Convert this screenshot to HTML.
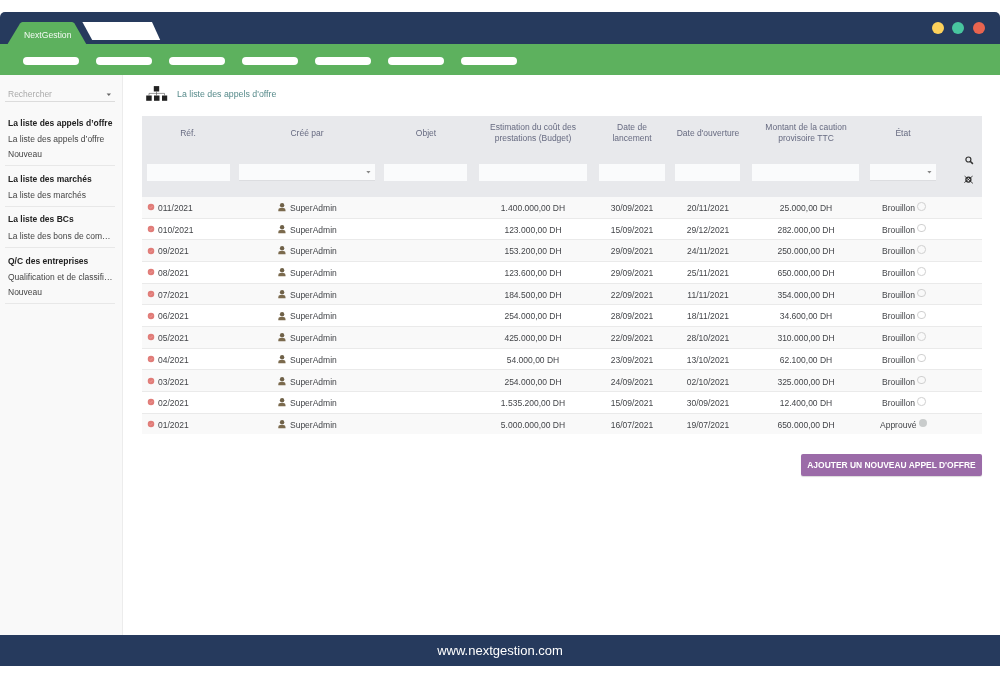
<!DOCTYPE html><html><head><meta charset="utf-8"><style>
*{box-sizing:border-box}
html,body{margin:0;padding:0;width:1000px;height:679px;overflow:hidden;background:#fff;font-family:"Liberation Sans",sans-serif}
.a{position:absolute}
.t{position:absolute;white-space:nowrap;line-height:1;will-change:transform}
.topbar{left:0;top:12px;width:1000px;height:32px;background:#263a5d;border-radius:5px 5px 0 0}
.greenbar{left:0;top:43.5px;width:1000px;height:31.5px;background:#5db15e}
.pill{top:57px;width:56px;height:8px;border-radius:4px;background:#fff}
.dot{width:12px;height:12px;border-radius:50%;top:21.5px}
.side{left:0;top:75px;width:123px;height:560px;background:#f9f9f9;border-right:1px solid #ececec}
.sep{left:5px;width:110px;height:1px;background:#e8e8e8}
.sb{font-size:8.5px;font-weight:bold;color:#222}
.si{font-size:8.5px;color:#444}
.footer{left:0;top:635px;width:1000px;height:31px;background:#263a5d}
.hdr{left:142px;top:116px;width:840px;height:81px;background:#e8e9ec}
.inp{top:163.5px;height:17px;background:#fafbfc}
.ht{font-size:8.5px;color:#666a80;text-align:center;line-height:11.1px}
.row{left:142px;width:840px}
.rt{font-size:8.5px;color:#434549}
</style></head><body>
<div class="a topbar"></div>
<div class="a greenbar"></div>
<svg class="a" style="left:0;top:0" width="200" height="46"><path d="M7 45 L20 23.5 Q21 22 22.5 22 L72 22 Q73.5 22 74.5 23.5 L86.8 45 Z" fill="#5db15e"/><path d="M82.4 22 L152 22 L160.2 40 L92.2 40 Z" fill="#fff"/></svg>
<div class="t" style="left:23.6px;top:30.5px;font-size:8.65px;color:#f4faf4">NextGestion</div>
<div class="a pill" style="left:23px"></div>
<div class="a pill" style="left:96px"></div>
<div class="a pill" style="left:169px"></div>
<div class="a pill" style="left:242px"></div>
<div class="a pill" style="left:315px"></div>
<div class="a pill" style="left:388px"></div>
<div class="a pill" style="left:461px"></div>
<div class="a dot" style="left:932px;background:#fdd15b"></div>
<div class="a dot" style="left:952px;background:#48c59f"></div>
<div class="a dot" style="left:973px;background:#e9644f"></div>
<div class="a side"></div>
<div class="t" style="left:8.3px;top:90px;font-size:8.5px;color:#aaa">Rechercher</div>
<svg class="a" style="left:106px;top:92.5px" width="6" height="4"><path d="M0.6 0.4 L5 0.4 L2.8 3Z" fill="#666"/></svg>
<div class="a sep" style="top:101px;background:#dcdcdc"></div>
<div class="t sb" style="left:8.2px;top:118.8px">La liste des appels d’offre</div>
<div class="t si" style="left:8.2px;top:135.0px">La liste des appels d’offre</div>
<div class="t si" style="left:8.2px;top:149.6px">Nouveau</div>
<div class="a sep" style="top:165px"></div>
<div class="t sb" style="left:8.2px;top:175.0px">La liste des marchés</div>
<div class="t si" style="left:8.2px;top:190.7px">La liste des marchés</div>
<div class="a sep" style="top:206px"></div>
<div class="t sb" style="left:8.2px;top:215.4px">La liste des BCs</div>
<div class="t si" style="left:8.2px;top:231.5px">La liste des bons de com…</div>
<div class="a sep" style="top:247px"></div>
<div class="t sb" style="left:8.2px;top:256.6px">Q/C des entreprises</div>
<div class="t si" style="left:8.2px;top:272.5px">Qualification et de classifi…</div>
<div class="t si" style="left:8.2px;top:287.7px">Nouveau</div>
<div class="a sep" style="top:303px"></div>
<svg class="a" style="left:145px;top:85px" width="24" height="17"><rect x="8.8" y="1.1" width="5.4" height="5.4" fill="#222"/><rect x="1.2" y="10.5" width="5.5" height="5.3" fill="#222"/><rect x="9" y="10.5" width="5.5" height="5.3" fill="#222"/><rect x="17" y="10.5" width="5.2" height="5.3" fill="#222"/><path d="M4 10.5 V8.4 H19.5 V10.5 M11.5 6.5 V10.5" stroke="#555" stroke-width="0.6" fill="none"/></svg>
<div class="t" style="left:176.7px;top:89.7px;font-size:8.8px;color:#568a8a">La liste des appels d'offre</div>
<div class="a hdr"></div>
<div class="t ht" style="left:128px;width:120px;top:127.8px">Réf.</div>
<div class="t ht" style="left:247px;width:120px;top:127.8px">Créé par</div>
<div class="t ht" style="left:365.6px;width:120px;top:127.8px">Objet</div>
<div class="t ht" style="left:473px;width:120px;top:122.1px">Estimation du coût des<br>prestations (Budget)</div>
<div class="t ht" style="left:572px;width:120px;top:122.1px">Date de<br>lancement</div>
<div class="t ht" style="left:647.7px;width:120px;top:127.8px">Date d'ouverture</div>
<div class="t ht" style="left:745.5px;width:120px;top:122.1px">Montant de la caution<br>provisoire TTC</div>
<div class="t ht" style="left:843.3px;width:120px;top:127.8px">État</div>
<div class="a inp" style="left:147px;width:83px;"></div>
<div class="a inp" style="left:239px;width:136px;border-bottom:1px solid #dcdde0;"></div>
<svg class="a" style="left:366.4px;top:171.2px" width="5" height="3"><path d="M0.3 0 L4.5 0 L2.4 2.6Z" fill="#888"/></svg>
<div class="a inp" style="left:384px;width:83px;"></div>
<div class="a inp" style="left:479px;width:108px;"></div>
<div class="a inp" style="left:599px;width:66px;"></div>
<div class="a inp" style="left:675px;width:65px;"></div>
<div class="a inp" style="left:752px;width:107px;"></div>
<div class="a inp" style="left:870px;width:66px;border-bottom:1px solid #dcdde0;"></div>
<svg class="a" style="left:927.4px;top:171.2px" width="5" height="3"><path d="M0.3 0 L4.5 0 L2.4 2.6Z" fill="#888"/></svg>
<svg class="a" style="left:963px;top:154px" width="12" height="12"><circle cx="5.4" cy="5.5" r="2.5" stroke="#333" stroke-width="1.2" fill="none"/><path d="M7.2 7.3 L9.9 9.9" stroke="#333" stroke-width="1.5"/></svg>
<svg class="a" style="left:963px;top:175px" width="12" height="10"><circle cx="5.4" cy="4.6" r="2.5" stroke="#2a2a2a" stroke-width="1.3" fill="none"/><path d="M1.6 1.1 L9.9 8.4 M9.6 1.1 L1.3 7.6" stroke="#333" stroke-width="0.9"/></svg>
<div class="a row" style="top:197px;height:21px;background:#f9f9f9"></div>
<svg class="a" style="left:147.1px;top:203.10px" width="8" height="8"><circle cx="4" cy="4" r="3.25" fill="#e07c78"/><path d="M2.5 4.1 L3.6 5.1 L5.5 3" stroke="#f3a19d" stroke-width="0.7" fill="none"/></svg>
<div class="t rt" style="left:157.8px;top:203.90px">011/2021</div>
<svg class="a" style="left:277.5px;top:203.00px" width="8" height="9"><circle cx="4.1" cy="2.2" r="2.2" fill="#6f6148"/><path d="M0.3 8.2 V6.9 Q0.3 4.9 2.4 4.9 H5.4 Q7.5 4.9 7.5 6.9 V8.2Z" fill="#7b6a4d"/></svg>
<div class="t rt" style="left:289.7px;top:203.90px">SuperAdmin</div>
<div class="t rt" style="left:473.29999999999995px;width:120px;text-align:center;top:203.90px">1.400.000,00 DH</div>
<div class="t rt" style="left:572.2px;width:120px;text-align:center;top:203.90px">30/09/2021</div>
<div class="t rt" style="left:647.5px;width:120px;text-align:center;top:203.90px">20/11/2021</div>
<div class="t rt" style="left:745.6px;width:120px;text-align:center;top:203.90px">25.000,00 DH</div>
<div class="t rt" style="left:881.7px;top:203.90px">Brouillon</div>
<div class="a" style="left:917px;top:202.00px;width:8.5px;height:8.5px;border-radius:50%;border:1px solid #d0d0d0"></div>
<div class="a row" style="top:218px;height:21px;background:#fff"></div>
<div class="a row" style="top:218px;height:1px;background:#eaeaea"></div>
<svg class="a" style="left:147.1px;top:224.80px" width="8" height="8"><circle cx="4" cy="4" r="3.25" fill="#e07c78"/><path d="M2.5 4.1 L3.6 5.1 L5.5 3" stroke="#f3a19d" stroke-width="0.7" fill="none"/></svg>
<div class="t rt" style="left:157.8px;top:225.60px">010/2021</div>
<svg class="a" style="left:277.5px;top:224.70px" width="8" height="9"><circle cx="4.1" cy="2.2" r="2.2" fill="#6f6148"/><path d="M0.3 8.2 V6.9 Q0.3 4.9 2.4 4.9 H5.4 Q7.5 4.9 7.5 6.9 V8.2Z" fill="#7b6a4d"/></svg>
<div class="t rt" style="left:289.7px;top:225.60px">SuperAdmin</div>
<div class="t rt" style="left:473.29999999999995px;width:120px;text-align:center;top:225.60px">123.000,00 DH</div>
<div class="t rt" style="left:572.2px;width:120px;text-align:center;top:225.60px">15/09/2021</div>
<div class="t rt" style="left:647.5px;width:120px;text-align:center;top:225.60px">29/12/2021</div>
<div class="t rt" style="left:745.6px;width:120px;text-align:center;top:225.60px">282.000,00 DH</div>
<div class="t rt" style="left:881.7px;top:225.60px">Brouillon</div>
<div class="a" style="left:917px;top:223.70px;width:8.5px;height:8.5px;border-radius:50%;border:1px solid #d0d0d0"></div>
<div class="a row" style="top:239px;height:22px;background:#f9f9f9"></div>
<div class="a row" style="top:239px;height:1px;background:#eaeaea"></div>
<svg class="a" style="left:147.1px;top:246.50px" width="8" height="8"><circle cx="4" cy="4" r="3.25" fill="#e07c78"/><path d="M2.5 4.1 L3.6 5.1 L5.5 3" stroke="#f3a19d" stroke-width="0.7" fill="none"/></svg>
<div class="t rt" style="left:157.8px;top:247.30px">09/2021</div>
<svg class="a" style="left:277.5px;top:246.40px" width="8" height="9"><circle cx="4.1" cy="2.2" r="2.2" fill="#6f6148"/><path d="M0.3 8.2 V6.9 Q0.3 4.9 2.4 4.9 H5.4 Q7.5 4.9 7.5 6.9 V8.2Z" fill="#7b6a4d"/></svg>
<div class="t rt" style="left:289.7px;top:247.30px">SuperAdmin</div>
<div class="t rt" style="left:473.29999999999995px;width:120px;text-align:center;top:247.30px">153.200,00 DH</div>
<div class="t rt" style="left:572.2px;width:120px;text-align:center;top:247.30px">29/09/2021</div>
<div class="t rt" style="left:647.5px;width:120px;text-align:center;top:247.30px">24/11/2021</div>
<div class="t rt" style="left:745.6px;width:120px;text-align:center;top:247.30px">250.000,00 DH</div>
<div class="t rt" style="left:881.7px;top:247.30px">Brouillon</div>
<div class="a" style="left:917px;top:245.40px;width:8.5px;height:8.5px;border-radius:50%;border:1px solid #d0d0d0"></div>
<div class="a row" style="top:261px;height:22px;background:#fff"></div>
<div class="a row" style="top:261px;height:1px;background:#eaeaea"></div>
<svg class="a" style="left:147.1px;top:268.20px" width="8" height="8"><circle cx="4" cy="4" r="3.25" fill="#e07c78"/><path d="M2.5 4.1 L3.6 5.1 L5.5 3" stroke="#f3a19d" stroke-width="0.7" fill="none"/></svg>
<div class="t rt" style="left:157.8px;top:269.00px">08/2021</div>
<svg class="a" style="left:277.5px;top:268.10px" width="8" height="9"><circle cx="4.1" cy="2.2" r="2.2" fill="#6f6148"/><path d="M0.3 8.2 V6.9 Q0.3 4.9 2.4 4.9 H5.4 Q7.5 4.9 7.5 6.9 V8.2Z" fill="#7b6a4d"/></svg>
<div class="t rt" style="left:289.7px;top:269.00px">SuperAdmin</div>
<div class="t rt" style="left:473.29999999999995px;width:120px;text-align:center;top:269.00px">123.600,00 DH</div>
<div class="t rt" style="left:572.2px;width:120px;text-align:center;top:269.00px">29/09/2021</div>
<div class="t rt" style="left:647.5px;width:120px;text-align:center;top:269.00px">25/11/2021</div>
<div class="t rt" style="left:745.6px;width:120px;text-align:center;top:269.00px">650.000,00 DH</div>
<div class="t rt" style="left:881.7px;top:269.00px">Brouillon</div>
<div class="a" style="left:917px;top:267.10px;width:8.5px;height:8.5px;border-radius:50%;border:1px solid #d0d0d0"></div>
<div class="a row" style="top:283px;height:21px;background:#f9f9f9"></div>
<div class="a row" style="top:283px;height:1px;background:#eaeaea"></div>
<svg class="a" style="left:147.1px;top:289.90px" width="8" height="8"><circle cx="4" cy="4" r="3.25" fill="#e07c78"/><path d="M2.5 4.1 L3.6 5.1 L5.5 3" stroke="#f3a19d" stroke-width="0.7" fill="none"/></svg>
<div class="t rt" style="left:157.8px;top:290.70px">07/2021</div>
<svg class="a" style="left:277.5px;top:289.80px" width="8" height="9"><circle cx="4.1" cy="2.2" r="2.2" fill="#6f6148"/><path d="M0.3 8.2 V6.9 Q0.3 4.9 2.4 4.9 H5.4 Q7.5 4.9 7.5 6.9 V8.2Z" fill="#7b6a4d"/></svg>
<div class="t rt" style="left:289.7px;top:290.70px">SuperAdmin</div>
<div class="t rt" style="left:473.29999999999995px;width:120px;text-align:center;top:290.70px">184.500,00 DH</div>
<div class="t rt" style="left:572.2px;width:120px;text-align:center;top:290.70px">22/09/2021</div>
<div class="t rt" style="left:647.5px;width:120px;text-align:center;top:290.70px">11/11/2021</div>
<div class="t rt" style="left:745.6px;width:120px;text-align:center;top:290.70px">354.000,00 DH</div>
<div class="t rt" style="left:881.7px;top:290.70px">Brouillon</div>
<div class="a" style="left:917px;top:288.80px;width:8.5px;height:8.5px;border-radius:50%;border:1px solid #d0d0d0"></div>
<div class="a row" style="top:304px;height:22px;background:#fff"></div>
<div class="a row" style="top:304px;height:1px;background:#eaeaea"></div>
<svg class="a" style="left:147.1px;top:311.60px" width="8" height="8"><circle cx="4" cy="4" r="3.25" fill="#e07c78"/><path d="M2.5 4.1 L3.6 5.1 L5.5 3" stroke="#f3a19d" stroke-width="0.7" fill="none"/></svg>
<div class="t rt" style="left:157.8px;top:312.40px">06/2021</div>
<svg class="a" style="left:277.5px;top:311.50px" width="8" height="9"><circle cx="4.1" cy="2.2" r="2.2" fill="#6f6148"/><path d="M0.3 8.2 V6.9 Q0.3 4.9 2.4 4.9 H5.4 Q7.5 4.9 7.5 6.9 V8.2Z" fill="#7b6a4d"/></svg>
<div class="t rt" style="left:289.7px;top:312.40px">SuperAdmin</div>
<div class="t rt" style="left:473.29999999999995px;width:120px;text-align:center;top:312.40px">254.000,00 DH</div>
<div class="t rt" style="left:572.2px;width:120px;text-align:center;top:312.40px">28/09/2021</div>
<div class="t rt" style="left:647.5px;width:120px;text-align:center;top:312.40px">18/11/2021</div>
<div class="t rt" style="left:745.6px;width:120px;text-align:center;top:312.40px">34.600,00 DH</div>
<div class="t rt" style="left:881.7px;top:312.40px">Brouillon</div>
<div class="a" style="left:917px;top:310.50px;width:8.5px;height:8.5px;border-radius:50%;border:1px solid #d0d0d0"></div>
<div class="a row" style="top:326px;height:22px;background:#f9f9f9"></div>
<div class="a row" style="top:326px;height:1px;background:#eaeaea"></div>
<svg class="a" style="left:147.1px;top:333.30px" width="8" height="8"><circle cx="4" cy="4" r="3.25" fill="#e07c78"/><path d="M2.5 4.1 L3.6 5.1 L5.5 3" stroke="#f3a19d" stroke-width="0.7" fill="none"/></svg>
<div class="t rt" style="left:157.8px;top:334.10px">05/2021</div>
<svg class="a" style="left:277.5px;top:333.20px" width="8" height="9"><circle cx="4.1" cy="2.2" r="2.2" fill="#6f6148"/><path d="M0.3 8.2 V6.9 Q0.3 4.9 2.4 4.9 H5.4 Q7.5 4.9 7.5 6.9 V8.2Z" fill="#7b6a4d"/></svg>
<div class="t rt" style="left:289.7px;top:334.10px">SuperAdmin</div>
<div class="t rt" style="left:473.29999999999995px;width:120px;text-align:center;top:334.10px">425.000,00 DH</div>
<div class="t rt" style="left:572.2px;width:120px;text-align:center;top:334.10px">22/09/2021</div>
<div class="t rt" style="left:647.5px;width:120px;text-align:center;top:334.10px">28/10/2021</div>
<div class="t rt" style="left:745.6px;width:120px;text-align:center;top:334.10px">310.000,00 DH</div>
<div class="t rt" style="left:881.7px;top:334.10px">Brouillon</div>
<div class="a" style="left:917px;top:332.20px;width:8.5px;height:8.5px;border-radius:50%;border:1px solid #d0d0d0"></div>
<div class="a row" style="top:348px;height:21px;background:#fff"></div>
<div class="a row" style="top:348px;height:1px;background:#eaeaea"></div>
<svg class="a" style="left:147.1px;top:355.00px" width="8" height="8"><circle cx="4" cy="4" r="3.25" fill="#e07c78"/><path d="M2.5 4.1 L3.6 5.1 L5.5 3" stroke="#f3a19d" stroke-width="0.7" fill="none"/></svg>
<div class="t rt" style="left:157.8px;top:355.80px">04/2021</div>
<svg class="a" style="left:277.5px;top:354.90px" width="8" height="9"><circle cx="4.1" cy="2.2" r="2.2" fill="#6f6148"/><path d="M0.3 8.2 V6.9 Q0.3 4.9 2.4 4.9 H5.4 Q7.5 4.9 7.5 6.9 V8.2Z" fill="#7b6a4d"/></svg>
<div class="t rt" style="left:289.7px;top:355.80px">SuperAdmin</div>
<div class="t rt" style="left:473.29999999999995px;width:120px;text-align:center;top:355.80px">54.000,00 DH</div>
<div class="t rt" style="left:572.2px;width:120px;text-align:center;top:355.80px">23/09/2021</div>
<div class="t rt" style="left:647.5px;width:120px;text-align:center;top:355.80px">13/10/2021</div>
<div class="t rt" style="left:745.6px;width:120px;text-align:center;top:355.80px">62.100,00 DH</div>
<div class="t rt" style="left:881.7px;top:355.80px">Brouillon</div>
<div class="a" style="left:917px;top:353.90px;width:8.5px;height:8.5px;border-radius:50%;border:1px solid #d0d0d0"></div>
<div class="a row" style="top:369px;height:22px;background:#f9f9f9"></div>
<div class="a row" style="top:369px;height:1px;background:#eaeaea"></div>
<svg class="a" style="left:147.1px;top:376.70px" width="8" height="8"><circle cx="4" cy="4" r="3.25" fill="#e07c78"/><path d="M2.5 4.1 L3.6 5.1 L5.5 3" stroke="#f3a19d" stroke-width="0.7" fill="none"/></svg>
<div class="t rt" style="left:157.8px;top:377.50px">03/2021</div>
<svg class="a" style="left:277.5px;top:376.60px" width="8" height="9"><circle cx="4.1" cy="2.2" r="2.2" fill="#6f6148"/><path d="M0.3 8.2 V6.9 Q0.3 4.9 2.4 4.9 H5.4 Q7.5 4.9 7.5 6.9 V8.2Z" fill="#7b6a4d"/></svg>
<div class="t rt" style="left:289.7px;top:377.50px">SuperAdmin</div>
<div class="t rt" style="left:473.29999999999995px;width:120px;text-align:center;top:377.50px">254.000,00 DH</div>
<div class="t rt" style="left:572.2px;width:120px;text-align:center;top:377.50px">24/09/2021</div>
<div class="t rt" style="left:647.5px;width:120px;text-align:center;top:377.50px">02/10/2021</div>
<div class="t rt" style="left:745.6px;width:120px;text-align:center;top:377.50px">325.000,00 DH</div>
<div class="t rt" style="left:881.7px;top:377.50px">Brouillon</div>
<div class="a" style="left:917px;top:375.60px;width:8.5px;height:8.5px;border-radius:50%;border:1px solid #d0d0d0"></div>
<div class="a row" style="top:391px;height:22px;background:#fff"></div>
<div class="a row" style="top:391px;height:1px;background:#eaeaea"></div>
<svg class="a" style="left:147.1px;top:398.40px" width="8" height="8"><circle cx="4" cy="4" r="3.25" fill="#e07c78"/><path d="M2.5 4.1 L3.6 5.1 L5.5 3" stroke="#f3a19d" stroke-width="0.7" fill="none"/></svg>
<div class="t rt" style="left:157.8px;top:399.20px">02/2021</div>
<svg class="a" style="left:277.5px;top:398.30px" width="8" height="9"><circle cx="4.1" cy="2.2" r="2.2" fill="#6f6148"/><path d="M0.3 8.2 V6.9 Q0.3 4.9 2.4 4.9 H5.4 Q7.5 4.9 7.5 6.9 V8.2Z" fill="#7b6a4d"/></svg>
<div class="t rt" style="left:289.7px;top:399.20px">SuperAdmin</div>
<div class="t rt" style="left:473.29999999999995px;width:120px;text-align:center;top:399.20px">1.535.200,00 DH</div>
<div class="t rt" style="left:572.2px;width:120px;text-align:center;top:399.20px">15/09/2021</div>
<div class="t rt" style="left:647.5px;width:120px;text-align:center;top:399.20px">30/09/2021</div>
<div class="t rt" style="left:745.6px;width:120px;text-align:center;top:399.20px">12.400,00 DH</div>
<div class="t rt" style="left:881.7px;top:399.20px">Brouillon</div>
<div class="a" style="left:917px;top:397.30px;width:8.5px;height:8.5px;border-radius:50%;border:1px solid #d0d0d0"></div>
<div class="a row" style="top:413px;height:21px;background:#f9f9f9"></div>
<div class="a row" style="top:413px;height:1px;background:#eaeaea"></div>
<svg class="a" style="left:147.1px;top:420.10px" width="8" height="8"><circle cx="4" cy="4" r="3.25" fill="#e07c78"/><path d="M2.5 4.1 L3.6 5.1 L5.5 3" stroke="#f3a19d" stroke-width="0.7" fill="none"/></svg>
<div class="t rt" style="left:157.8px;top:420.90px">01/2021</div>
<svg class="a" style="left:277.5px;top:420.00px" width="8" height="9"><circle cx="4.1" cy="2.2" r="2.2" fill="#6f6148"/><path d="M0.3 8.2 V6.9 Q0.3 4.9 2.4 4.9 H5.4 Q7.5 4.9 7.5 6.9 V8.2Z" fill="#7b6a4d"/></svg>
<div class="t rt" style="left:289.7px;top:420.90px">SuperAdmin</div>
<div class="t rt" style="left:473.29999999999995px;width:120px;text-align:center;top:420.90px">5.000.000,00 DH</div>
<div class="t rt" style="left:572.2px;width:120px;text-align:center;top:420.90px">16/07/2021</div>
<div class="t rt" style="left:647.5px;width:120px;text-align:center;top:420.90px">19/07/2021</div>
<div class="t rt" style="left:745.6px;width:120px;text-align:center;top:420.90px">650.000,00 DH</div>
<div class="t rt" style="left:879.7px;top:420.90px">Approuvé</div>
<div class="a" style="left:918.8px;top:418.70px;width:8.5px;height:8.5px;border-radius:50%;background:#c9cccc"></div>
<div class="a" style="left:801px;top:453.5px;width:181px;height:22.5px;background:#9b6ba8;border-radius:2px;box-shadow:0 1px 1px rgba(0,0,0,0.15)"></div>
<div class="t" style="left:801px;width:181px;text-align:center;top:461px;font-size:8.45px;font-weight:bold;color:#fff">AJOUTER UN NOUVEAU APPEL D'OFFRE</div>
<div class="a footer"></div>
<div class="t" style="left:0;width:1000px;text-align:center;top:644px;font-size:13px;color:#fff">www.nextgestion.com</div>
</body></html>
